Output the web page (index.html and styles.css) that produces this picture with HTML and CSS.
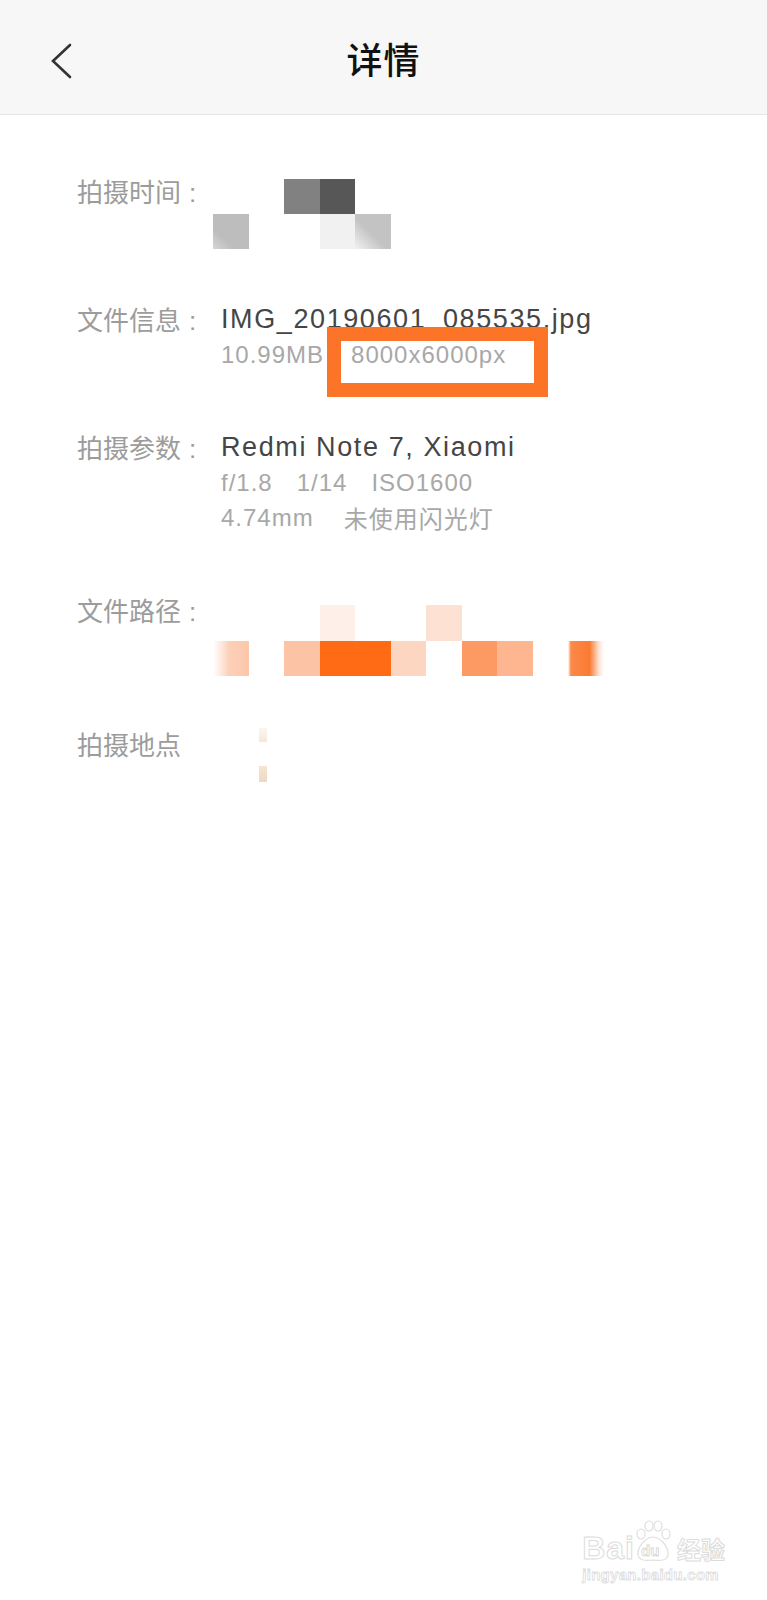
FILE: index.html
```html
<!DOCTYPE html>
<html lang="zh-CN">
<head>
<meta charset="utf-8">
<title>详情</title>
<link rel="stylesheet" href="styles.css">
</head>
<body>
<div class="page">
  <header class="topbar">
    <div class="back">
      <svg width="32" height="48" viewBox="0 0 32 48"><polyline points="24,12 7,28 24,44" fill="none" stroke="#333" stroke-width="2.6" stroke-linecap="round" stroke-linejoin="miter"/></svg>
    </div>
    <h1 class="title">详情</h1>
    <div class="spacer"></div>
  </header>

  <main class="details">
    <section class="row">
      <div class="label">拍摄时间<span class="colon">:</span></div>
      <div class="value">
        <div class="mosaic mosaic-time">
          <span class="c c-w"></span><span class="c c-w"></span><span class="c g-mid"></span><span class="c g-dark"></span><span class="c c-w"></span><span class="c c-w"></span>
          <span class="c g-light"></span><span class="c c-w"></span><span class="c c-w"></span><span class="c g-pale"></span><span class="c g-soft"></span><span class="c c-w"></span>
        </div>
      </div>
    </section>

    <section class="row">
      <div class="label">文件信息<span class="colon">:</span></div>
      <div class="value">
        <div class="main">IMG_20190601_085535.jpg</div>
        <div class="sub sub-file"><span class="size">10.99MB</span><span class="dim">8000x6000px</span><span class="highlight"></span></div>
      </div>
    </section>

    <section class="row">
      <div class="label">拍摄参数<span class="colon">:</span></div>
      <div class="value">
        <div class="main">Redmi Note 7, Xiaomi</div>
        <div class="sub"><span class="item">f/1.8</span><span class="item">1/14</span><span class="item">ISO1600</span></div>
        <div class="sub"><span class="item wide">4.74mm</span><span class="item cjk">未使用闪光灯</span></div>
      </div>
    </section>

    <section class="row row-path">
      <div class="label">文件路径<span class="colon">:</span></div>
      <div class="value">
        <div class="mosaic mosaic-path">
          <span class="c c-w"></span><span class="c c-w"></span><span class="c c-w"></span><span class="c o-pale"></span><span class="c c-w"></span><span class="c c-w"></span><span class="c o-pale2"></span><span class="c c-w"></span><span class="c c-w"></span><span class="c c-w"></span><span class="c c-w"></span><span class="c c-w"></span>
          <span class="c o-fadein"></span><span class="c c-w"></span><span class="c o-light"></span><span class="c o-strong"></span><span class="c o-strong"></span><span class="c o-soft"></span><span class="c c-w"></span><span class="c o-mid"></span><span class="c o-mid2"></span><span class="c c-w"></span><span class="c o-fadeout"></span><span class="c c-w"></span>
        </div>
      </div>
    </section>

    <section class="row">
      <div class="label">拍摄地点</div>
      <div class="value">
        <div class="loc">
          <span class="loc-mark top"></span>
          <span class="loc-mark bottom"></span>
        </div>
      </div>
    </section>
  </main>

  <div class="watermark">
    <div class="wm-logo">
      <span class="wm-bai">Bai</span>
      <span class="wm-paw">
        <svg width="44" height="44" viewBox="0 0 44 44">
          <g fill="#fff" stroke="#dedede" stroke-width="1.2">
            <ellipse cx="10" cy="14" rx="4" ry="5"/>
            <ellipse cx="18" cy="6" rx="4" ry="5"/>
            <ellipse cx="27" cy="6" rx="4" ry="5"/>
            <ellipse cx="35" cy="14" rx="4" ry="5"/>
            <path d="M22 17 C14 17 6 28 7 35 C8 41 15 41 22 40 C29 41 36 41 37 35 C38 28 30 17 22 17 Z"/>
          </g>
        </svg>
        <span class="wm-du">du</span>
      </span>
      <span class="wm-jy">经验</span>
    </div>
    <div class="wm-url">jingyan.baidu.com</div>
  </div>
</div>
</body>
</html>
```
FILE: styles.css
```css
* { box-sizing: border-box; }

html, body {
  margin: 0;
  padding: 0;
  background: #ffffff;
}

.page {
  position: relative;
  width: 767px;
  min-height: 1600px;
  font-family: "Liberation Sans", "Noto Sans CJK SC", sans-serif;
}

.topbar {
  height: 115px;
  background: #f7f7f7;
  border-bottom: 1px solid #e4e4e4;
  display: grid;
  grid-template-columns: 1fr auto 1fr;
  align-items: center;
}

.back {
  padding-left: 46px;
  display: flex;
  align-items: center;
}

.back svg { display: block; }

.title {
  margin: 0;
  font-family: "Noto Sans CJK SC", sans-serif;
  font-size: 36px;
  font-weight: 500;
  color: #111;
  letter-spacing: 1px;
  line-height: 1;
  padding-top: 2px;
}

.details {
  padding: 58px 0 0 77px;
  display: flex;
  flex-direction: column;
  gap: 57px;
}

.row {
  display: flex;
  align-items: flex-start;
}

.label {
  width: 144px;
  flex: none;
  font-family: "Noto Sans CJK SC", sans-serif;
  font-size: 26px;
  line-height: 36px;
  color: #9c9c9c;
  white-space: nowrap;
}

.colon {
  font-family: "Liberation Sans", sans-serif;
  margin-left: 8px;
}

.value {
  display: flex;
  flex-direction: column;
  min-height: 71px;
}

.main {
  font-size: 27px;
  line-height: 36px;
  color: #454545;
  letter-spacing: 1.6px;
  white-space: nowrap;
}

.sub {
  font-size: 24px;
  line-height: 35px;
  color: #a8a8a8;
  letter-spacing: 1px;
  white-space: nowrap;
  display: flex;
}

.sub-file { position: relative; }

.size { margin-right: 27px; }

.item { margin-right: 24px; }
.item.wide { margin-right: 30px; }
.item.cjk {
  font-family: "Noto Sans CJK SC", sans-serif;
  font-size: 24px;
  letter-spacing: 1px;
}

.highlight {
  position: absolute;
  left: 106px;
  top: -10px;
  width: 221px;
  height: 70px;
  border: 14px solid #fb7428;
}

/* pixelated (mosaic) values */
.mosaic {
  display: grid;
  grid-template-columns: repeat(6, 35.5px);
  grid-template-rows: 35px 35px;
  margin-left: -8px;
  filter: blur(0.5px);
}

.mosaic-time {
  margin-top: 6px;
  margin-bottom: -5px;
}

.mosaic-path {
  grid-template-columns: repeat(12, 35.5px);
  grid-template-rows: 36px 35px;
  margin-top: 13px;
  margin-bottom: -7px;
}

.c { display: block; }
.c-w { background: transparent; }

.g-mid { background: #818181; }
.g-dark { background: #575757; }
.g-light { background: linear-gradient(to top right, #d6d6d6 0%, #bdbdbd 30%, #bdbdbd 100%); }
.g-pale { background: #f1f1f1; }
.g-soft { background: linear-gradient(to top right, #f2f2f2 0%, #c3c3c3 45%, #c3c3c3 100%); }

.o-pale { background: #fef0e8; }
.o-pale2 { background: #fde2d3; }
.o-fadein { background: linear-gradient(to right, #ffffff 0%, #fde6da 25%, #fcd0b8 45%, #fcc7aa 100%); }
.o-light { background: #fcc3a4; }
.o-strong { background: #ff6a14; }
.o-soft { background: #fdd6c1; }
.o-mid { background: #fd9a63; }
.o-mid2 { background: #fdb68f; }
.o-fadeout { background: linear-gradient(to right, #ffffff 0%, #fb8a4a 8%, #fb7a32 60%, #fde0d0 85%, #ffffff 100%); }

.loc {
  position: relative;
  height: 71px;
}

.loc-mark {
  position: absolute;
  display: block;
  width: 8px;
  left: 38px;
  background: linear-gradient(to bottom, #fbf3ec, #f3e1cf);
  opacity: 0.8;
}
.loc-mark.top { top: 2px; height: 14px; }
.loc-mark.bottom { top: 40px; height: 16px; background: linear-gradient(to bottom, #f1d9c2, #e8c7a6); opacity: 0.7; }

/* watermark overlay */
.watermark {
  position: absolute;
  right: 42px;
  bottom: 16px;
  display: flex;
  flex-direction: column;
  align-items: flex-start;
  white-space: nowrap;
}

.wm-logo {
  display: flex;
  align-items: flex-end;
  height: 48px;
}

.wm-bai {
  font-family: "Liberation Sans", sans-serif;
  font-weight: bold;
  font-size: 32px;
  line-height: 32px;
  color: #fff;
  -webkit-text-stroke: 1px #dcdcdc;
  letter-spacing: 1px;
}

.wm-paw {
  position: relative;
  width: 44px;
  height: 44px;
  margin-left: -4px;
  flex: none;
}
.wm-paw svg { display: block; }

.wm-du {
  position: absolute;
  left: 10px;
  top: 22px;
  font-family: "Liberation Sans", sans-serif;
  font-weight: bold;
  font-size: 15px;
  color: #fff;
  -webkit-text-stroke: 0.8px #d6d6d6;
}

.wm-jy {
  font-family: "Noto Sans CJK SC", sans-serif;
  font-weight: bold;
  font-size: 24px;
  line-height: 30px;
  color: #fff;
  -webkit-text-stroke: 1px #dcdcdc;
  margin-left: 2px;
}

.wm-url {
  font-family: "Liberation Sans", sans-serif;
  font-weight: bold;
  font-size: 15px;
  line-height: 18px;
  color: #fff;
  -webkit-text-stroke: 0.8px #dcdcdc;
  letter-spacing: 0.3px;
  margin-top: 2px;
}
```
